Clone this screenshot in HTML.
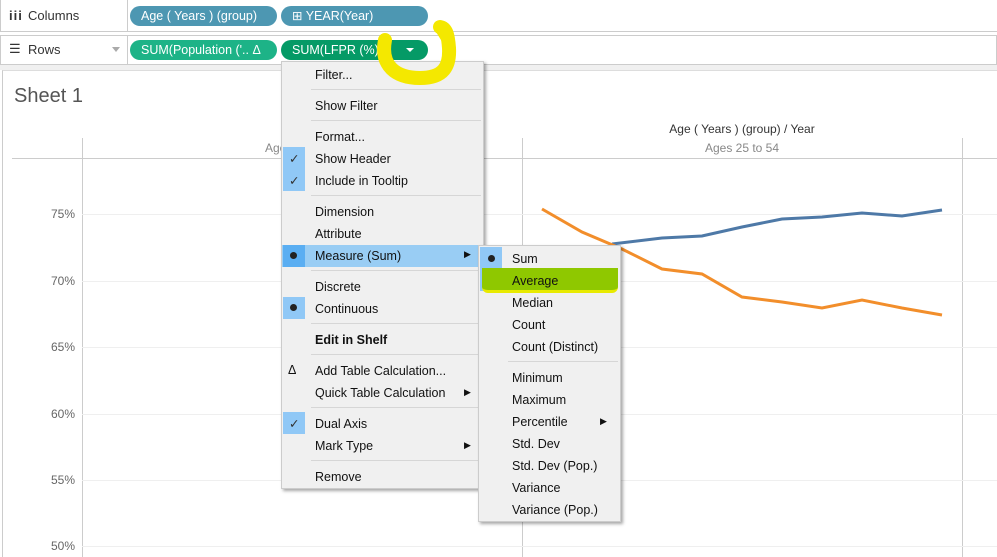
<!DOCTYPE html>
<html><head><meta charset="utf-8"><style>
*{margin:0;padding:0;box-sizing:border-box}
body{width:997px;height:557px;overflow:hidden;background:#fff;font-family:"Liberation Sans",sans-serif;position:relative}
.a{position:absolute}
.lbl{font-size:13px;color:#333}
.pill{position:absolute;height:20px;border-radius:10px;color:#fff;font-size:12.5px;line-height:20px;padding-left:11px;white-space:nowrap}
.m{position:absolute;font-size:12.5px;color:#111;white-space:nowrap}
.sep{position:absolute;height:1px;background:#d6d6d6}
.chk{position:absolute;background:#90c8f6}
.dot{position:absolute;width:7px;height:7px;border-radius:50%;background:#222}
.yl{position:absolute;font-size:12px;color:#666;text-align:right;width:40px}
.gl{position:absolute;height:1px;background:#efefef;left:82px;right:0}
</style></head><body>
<div class="a" style="left:0;top:0;width:997px;height:32px;background:#fff;border-bottom:1px solid #ccc;border-left:1px solid #ccc"></div>
<div class="a" style="left:127px;top:0;width:1px;height:32px;background:#ccc"></div>
<div class="a" style="left:0;top:35px;width:997px;height:30px;background:#fff;border:1px solid #ccc"></div>
<div class="a" style="left:127px;top:35px;width:1px;height:30px;background:#ccc"></div>
<div class="a" style="left:0;top:65px;width:997px;height:5px;background:#f0f0f0"></div>
<div class="a lbl" style="left:9px;top:8px;font-weight:bold;letter-spacing:1px">iii</div>
<div class="a lbl" style="left:28px;top:8px">Columns</div>
<div class="a lbl" style="left:9px;top:41px">☰</div>
<div class="a lbl" style="left:28px;top:42px">Rows</div>
<div class="a" style="left:112px;top:47px;border:4px solid transparent;border-top:5px solid #aaa"></div>
<div class="pill" style="left:130px;top:6px;width:147px;background:#4d97b2">Age ( Years ) (group)</div>
<div class="pill" style="left:281px;top:6px;width:147px;background:#4d97b2">⊞ YEAR(Year)</div>
<div class="pill" style="left:130px;top:40px;width:147px;background:#1db387">SUM(Population ('..  Δ</div>
<div class="pill" style="left:281px;top:40px;width:147px;background:#059a66">SUM(LFPR (%))</div>
<div class="a" style="left:406px;top:48px;border:4px solid transparent;border-top:4px solid #fff"></div>
<div class="a" style="left:2px;top:70px;width:995px;height:487px;border-left:1px solid #ccc;border-top:1px solid #ddd"></div>
<div class="a" style="left:14px;top:85px;font-size:20px;color:#555">Sheet 1</div>
<div class="a" style="left:560px;top:122px;width:364px;text-align:center;font-size:12px;color:#333">Age ( Years ) (group)  /  Year</div>
<div class="a" style="left:82px;top:141px;width:440px;text-align:center;font-size:12px;color:#888">Ages 25 to 54</div>
<div class="a" style="left:522px;top:141px;width:440px;text-align:center;font-size:12px;color:#888">Ages 25 to 54</div>
<div class="a" style="left:12px;top:158px;width:985px;height:1px;background:#ccc"></div>
<div class="a" style="left:82px;top:138px;width:1px;height:419px;background:#ccc"></div>
<div class="a" style="left:522px;top:138px;width:1px;height:419px;background:#ccc"></div>
<div class="a" style="left:962px;top:138px;width:1px;height:419px;background:#ccc"></div>
<div class="gl" style="top:214px"></div><div class="gl" style="top:281px"></div><div class="gl" style="top:347px"></div><div class="gl" style="top:414px"></div><div class="gl" style="top:480px"></div><div class="gl" style="top:546px"></div>
<div class="yl" style="left:35px;top:207px">75%</div>
<div class="yl" style="left:35px;top:274px">70%</div>
<div class="yl" style="left:35px;top:340px">65%</div>
<div class="yl" style="left:35px;top:407px">60%</div>
<div class="yl" style="left:35px;top:473px">55%</div>
<div class="yl" style="left:35px;top:539px">50%</div>
<svg class="a" style="left:0;top:0" width="997" height="557">
<polyline fill="none" stroke="#4e79a7" stroke-width="3" points="612,244 662,238 702,236 742,227 782,219 822,217 862,213 902,216 942,210"/>
<polyline fill="none" stroke="#f28e2b" stroke-width="3" points="542,209 582,232 622,249 662,269 702,274 742,297 782,302 822,308 862,300 902,308 942,315"/>
</svg>
<div class="a" style="left:281px;top:61px;width:203px;height:428px;background:#f0f0f0;border:1px solid #ccc;box-shadow:2px 2px 3px rgba(0,0,0,.35)"></div>
<div class="a" style="left:282px;top:245px;width:201px;height:22px;background:#99cdf4"></div>
<div class="chk" style="left:283px;top:147px;width:22px;height:44px"></div>
<div class="chk" style="left:283px;top:245px;width:22px;height:22px;background:#5aaef2"></div>
<div class="chk" style="left:283px;top:297px;width:22px;height:22px"></div>
<div class="chk" style="left:283px;top:412px;width:22px;height:22px"></div>
<div class="m" style="left:289px;top:151px;color:#333">✓</div>
<div class="m" style="left:289px;top:173px;color:#333">✓</div>
<div class="m" style="left:289px;top:416px;color:#333">✓</div>
<div class="dot" style="left:290px;top:252px"></div>
<div class="dot" style="left:290px;top:304px"></div>
<div class="m" style="left:288px;top:363px">Δ</div>
<div class="m" style="left:315px;top:68px">Filter...</div>
<div class="sep" style="left:311px;top:89px;width:170px"></div>
<div class="m" style="left:315px;top:99px">Show Filter</div>
<div class="sep" style="left:311px;top:120px;width:170px"></div>
<div class="m" style="left:315px;top:130px">Format...</div>
<div class="m" style="left:315px;top:152px">Show Header</div>
<div class="m" style="left:315px;top:174px">Include in Tooltip</div>
<div class="sep" style="left:311px;top:195px;width:170px"></div>
<div class="m" style="left:315px;top:205px">Dimension</div>
<div class="m" style="left:315px;top:227px">Attribute</div>
<div class="m" style="left:315px;top:249px">Measure (Sum)</div>
<div class="m" style="left:464px;top:249px;font-size:9px">▶</div>
<div class="sep" style="left:311px;top:270px;width:170px"></div>
<div class="m" style="left:315px;top:280px">Discrete</div>
<div class="m" style="left:315px;top:302px">Continuous</div>
<div class="sep" style="left:311px;top:323px;width:170px"></div>
<div class="m" style="left:315px;top:333px;font-weight:bold">Edit in Shelf</div>
<div class="sep" style="left:311px;top:354px;width:170px"></div>
<div class="m" style="left:315px;top:364px">Add Table Calculation...</div>
<div class="m" style="left:315px;top:386px">Quick Table Calculation</div>
<div class="m" style="left:464px;top:387px;font-size:9px">▶</div>
<div class="sep" style="left:311px;top:407px;width:170px"></div>
<div class="m" style="left:315px;top:417px">Dual Axis</div>
<div class="m" style="left:315px;top:439px">Mark Type</div>
<div class="m" style="left:464px;top:440px;font-size:9px">▶</div>
<div class="sep" style="left:311px;top:460px;width:170px"></div>
<div class="m" style="left:315px;top:470px">Remove</div>
<div class="a" style="left:478px;top:245px;width:143px;height:277px;background:#f0f0f0;border:1px solid #ccc;box-shadow:2px 2px 3px rgba(0,0,0,.35)"></div>
<div class="chk" style="left:480px;top:247px;width:22px;height:44px"></div>
<div class="a" style="left:482px;top:268px;width:136px;height:25px;background:#8fc800;border-bottom:3px solid #e8ea00;border-radius:0 0 6px 6px"></div>
<div class="dot" style="left:488px;top:255px"></div>
<div class="m" style="left:512px;top:252px">Sum</div>
<div class="m" style="left:512px;top:274px">Average</div>
<div class="m" style="left:512px;top:296px">Median</div>
<div class="m" style="left:512px;top:318px">Count</div>
<div class="m" style="left:512px;top:340px">Count (Distinct)</div>
<div class="sep" style="left:508px;top:361px;width:110px"></div>
<div class="m" style="left:512px;top:371px">Minimum</div>
<div class="m" style="left:512px;top:393px">Maximum</div>
<div class="m" style="left:512px;top:415px">Percentile</div>
<div class="m" style="left:600px;top:416px;font-size:9px">▶</div>
<div class="m" style="left:512px;top:437px">Std. Dev</div>
<div class="m" style="left:512px;top:459px">Std. Dev (Pop.)</div>
<div class="m" style="left:512px;top:481px">Variance</div>
<div class="m" style="left:512px;top:503px">Variance (Pop.)</div>
<svg class="a" style="left:0;top:0" width="997" height="557">
<path d="M385 40 C380 66 396 78 420 78 C444 78 450 66 449 48 C448 34 446 28 440 27" fill="none" stroke="#f4e800" stroke-width="14" stroke-linecap="round"/>
<path d="M440 27 L448 40" stroke="#f4e800" stroke-width="12" stroke-linecap="round"/>
</svg>
</body></html>
